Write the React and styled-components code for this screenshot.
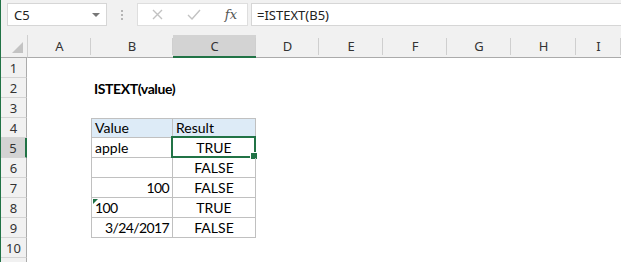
import styled, { createGlobalStyle } from "styled-components";

const GlobalStyle = createGlobalStyle`
  html, body {
    margin: 0;
    padding: 0;
    background: #fff;
  }
  * {
    box-sizing: border-box;
  }
`;

const Frame = styled.div`
  width: 621px;
  height: 262px;
  overflow: hidden;
  border-left: 1px solid #217346;
  display: flex;
  flex-direction: column;
  background: #fff;
`;

const FormulaBar = styled.div`
  height: 35px;
  flex-shrink: 0;
  display: flex;
  align-items: flex-start;
  padding: 3px 0 0 6px;
  background: #f1f1f1;
  font-family: "Noto Sans", "Open Sans", sans-serif;
`;

const NameBox = styled.div`
  width: 100px;
  height: 23px;
  background: #fff;
  border: 1px solid #d6d6d6;
  display: flex;
  align-items: center;
  justify-content: space-between;
  padding: 0 6px 0 6px;
  font-size: 13px;
  color: #222;
`;

const Caret = styled.span`
  width: 0;
  height: 0;
  border-left: 4px solid transparent;
  border-right: 4px solid transparent;
  border-top: 4px solid #777;
`;

const Grip = styled.div`
  width: 30px;
  height: 23px;
  display: flex;
  flex-direction: column;
  align-items: center;
  justify-content: center;
  gap: 2px;

  span {
    width: 2px;
    height: 2px;
    background: #b5b5b5;
  }
`;

const FxGroup = styled.div`
  width: 111px;
  height: 23px;
  background: #fff;
  border: 1px solid #dedede;
  display: flex;
  align-items: center;
  justify-content: space-between;
  padding: 0 10px 0 14px;
`;

const FxLabel = styled.span`
  font-family: "DejaVu Serif", "Liberation Serif", serif;
  font-style: italic;
  font-size: 13px;
  color: #555;
`;

const FormulaInput = styled.div`
  flex: 1;
  height: 23px;
  margin-left: 3px;
  background: #fff;
  border: 1px solid #d6d6d6;
  border-right: none;
  display: flex;
  align-items: center;
  padding-left: 5px;
  font-size: 13px;
  color: #222;
`;

const Sheet = styled.div`
  display: grid;
  grid-template-columns: 27px 63px 82px 83px 63px 64px 64px 64px 65px 1fr;
  grid-template-rows: 23px repeat(11, 20px);
  font-family: Lato, "Liberation Sans", sans-serif;
  font-size: 14px;
  color: #000;
`;

const Corner = styled.div`
  background: #f1f1f1;
  border-bottom: 1px solid #ababab;
  border-right: 1px solid #d0d0d0;
  position: relative;

  &::after {
    content: "";
    position: absolute;
    right: 4px;
    bottom: 4px;
    width: 0;
    height: 0;
    border-left: 11px solid transparent;
    border-bottom: 11px solid #c3c3c3;
  }
`;

const ColHead = styled.div`
  background: ${(p) => (p.$active ? "#d3d3d3" : "#f1f1f1")};
  border-bottom: ${(p) => (p.$active ? "2px solid #217346" : "1px solid #ababab")};
  display: flex;
  align-items: center;
  justify-content: center;
  font-family: "Noto Sans", "Open Sans", sans-serif;
  font-size: 13px;
  color: #333;
  position: relative;

  &::after {
    content: "";
    position: absolute;
    right: 0;
    top: 3px;
    bottom: 2px;
    width: 1px;
    background: #cfcfcf;
  }
`;

const RowHead = styled.div`
  background: ${(p) => (p.$active ? "#d3d3d3" : "#f1f1f1")};
  border-bottom: 1px solid #d4d4d4;
  border-right: ${(p) => (p.$active ? "2px solid #217346" : "1px solid #ababab")};
  margin-right: 1px;
  display: flex;
  align-items: center;
  justify-content: center;
  font-family: "Noto Sans", "Open Sans", sans-serif;
  font-size: 13px;
  color: #333;
`;

const Cell = styled.div`
  position: relative;
  display: flex;
  align-items: flex-end;
  padding: 0 3px 1px 3px;
  white-space: nowrap;
  justify-content: ${(p) =>
    p.$align === "right" ? "flex-end" : p.$align === "center" ? "center" : "flex-start"};
  font-weight: ${(p) => (p.$bold ? 700 : 400)};
  letter-spacing: ${(p) => (p.$bold ? "-0.4px" : p.$num ? "-0.6px" : "0")};
  background: ${(p) => p.$fill || "transparent"};
  border-right: ${(p) => (p.$boxed ? "1px solid #c0c0c0" : "none")};
  border-bottom: ${(p) => (p.$boxed ? "1px solid #c0c0c0" : "none")};
  border-top: ${(p) => (p.$top ? "1px solid #c0c0c0" : "none")};
  border-left: ${(p) => (p.$left ? "1px solid #c0c0c0" : "none")};
`;

const ErrorFlag = styled.span`
  position: absolute;
  left: 1px;
  top: 1px;
  width: 0;
  height: 0;
  border-top: 5px solid #1e7145;
  border-right: 5px solid transparent;
`;

const Selection = styled.span`
  position: absolute;
  left: -2px;
  top: -2px;
  right: -1px;
  bottom: -1px;
  border: 2px solid #217346;
  pointer-events: none;

  &::after {
    content: "";
    position: absolute;
    right: -4px;
    bottom: -4px;
    width: 6px;
    height: 6px;
    background: #217346;
    border: 1px solid #fff;
  }
`;

const columns = ["A", "B", "C", "D", "E", "F", "G", "H", "I"];

const table = [
  [{ text: "Value", fill: "#ddebf7" }, { text: "Result", fill: "#ddebf7" }],
  [{ text: "apple" }, { text: "TRUE", align: "center", selected: true }],
  [{ text: "" }, { text: "FALSE", align: "center" }],
  [{ text: "100", align: "right", num: true }, { text: "FALSE", align: "center" }],
  [{ text: "100", flag: true, num: true }, { text: "TRUE", align: "center" }],
  [{ text: "3/24/2017", align: "right", num: true }, { text: "FALSE", align: "center" }],
];

function renderRow(r) {
  const cells = [];
  for (let c = 0; c < columns.length; c++) {
    const key = `${r}-${c}`;
    if (r === 2 && c === 1) {
      cells.push(
        <Cell key={key} $bold>
          ISTEXT(value)
        </Cell>
      );
    } else if (r >= 4 && r <= 9 && (c === 1 || c === 2)) {
      const d = table[r - 4][c - 1];
      cells.push(
        <Cell
          key={key}
          $boxed
          $top={r === 4}
          $left={c === 1}
          $align={d.align}
          $fill={d.fill}
          $num={d.num}
        >
          {d.flag && <ErrorFlag />}
          {d.text}
          {d.selected && <Selection />}
        </Cell>
      );
    } else {
      cells.push(<Cell key={key} />);
    }
  }
  return cells;
}

export default function App() {
  const rows = Array.from({ length: 11 }, (_, i) => i + 1);
  return (
    <>
      <GlobalStyle />
      <Frame>
        <FormulaBar>
          <NameBox>
            C5
            <Caret />
          </NameBox>
          <Grip>
            <span />
            <span />
            <span />
          </Grip>
          <FxGroup>
            <svg width="11" height="11" viewBox="0 0 11 11">
              <path d="M1 1L10 10M10 1L1 10" stroke="#c2c2c2" strokeWidth="1.4" fill="none" />
            </svg>
            <svg width="14" height="11" viewBox="0 0 14 11">
              <path d="M1 6L5 10L13 1" stroke="#c2c2c2" strokeWidth="1.4" fill="none" />
            </svg>
            <FxLabel>fx</FxLabel>
          </FxGroup>
          <FormulaInput>=ISTEXT(B5)</FormulaInput>
        </FormulaBar>
        <Sheet>
          <Corner />
          {columns.map((col) => (
            <ColHead key={col} $active={col === "C"}>
              {col}
            </ColHead>
          ))}
          {rows.map((r) => [
            <RowHead key={`h${r}`} $active={r === 5}>
              {r <= 10 ? r : ""}
            </RowHead>,
            ...renderRow(r),
          ])}
        </Sheet>
      </Frame>
    </>
  );
}
